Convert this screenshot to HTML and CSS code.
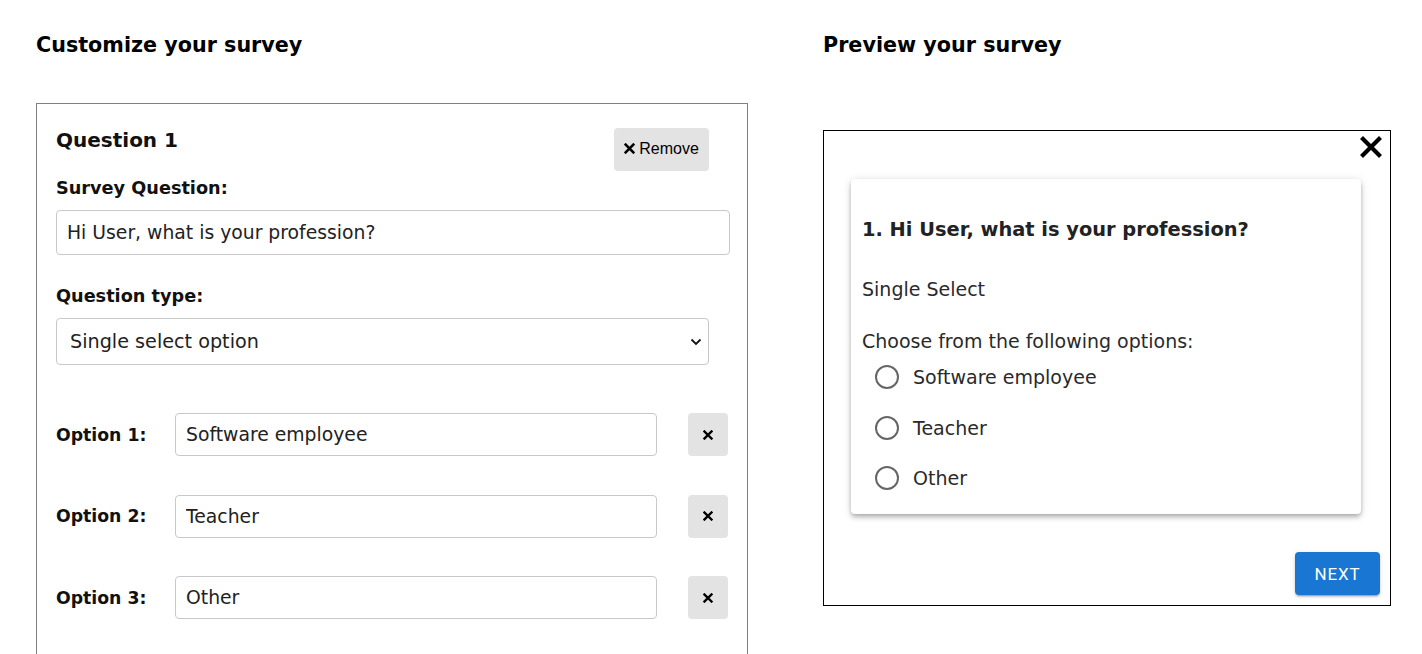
FILE: index.html
```html
<!DOCTYPE html>
<html lang="en">
<head>
<meta charset="utf-8">
<title>Survey builder</title>
<link rel="stylesheet" href="styles.css">
</head>
<body>
<div class="page">
  <section class="col col-left">
    <h2 class="heading">Customize your survey</h2>
    <div class="editor">
      <div class="q-head">
        <h3 class="q-title">Question 1</h3>
        <button class="remove-btn"><svg class="remove-x" viewBox="0 0 10 10" width="11" height="11"><path d="M1.5 1.5 L8.5 8.5 M8.5 1.5 L1.5 8.5" stroke="#000" stroke-width="2.4" stroke-linecap="square"/></svg>Remove</button>
      </div>
      <label class="field-label first">Survey Question:</label>
      <input class="text-input" type="text" value="Hi User, what is your profession?">
      <label class="field-label">Question type:</label>
      <div class="select-wrap">
        <select class="select-input"><option>Single select option</option></select>
        <svg class="chevron" viewBox="0 0 12 8" width="12" height="8"><path d="M1.5 1.5 L6 6 L10.5 1.5" fill="none" stroke="#111" stroke-width="1.8"/></svg>
      </div>
      <div class="options">
        <div class="opt-row">
          <span class="opt-label">Option 1:</span>
          <input class="opt-input" type="text" value="Software employee">
          <button class="del-btn"><svg viewBox="0 0 10 10" width="10" height="10"><path d="M1.5 1.5 L8.5 8.5 M8.5 1.5 L1.5 8.5" stroke="#000" stroke-width="2.4" stroke-linecap="square"/></svg></button>
        </div>
        <div class="opt-row">
          <span class="opt-label">Option 2:</span>
          <input class="opt-input" type="text" value="Teacher">
          <button class="del-btn"><svg viewBox="0 0 10 10" width="10" height="10"><path d="M1.5 1.5 L8.5 8.5 M8.5 1.5 L1.5 8.5" stroke="#000" stroke-width="2.4" stroke-linecap="square"/></svg></button>
        </div>
        <div class="opt-row">
          <span class="opt-label">Option 3:</span>
          <input class="opt-input" type="text" value="Other">
          <button class="del-btn"><svg viewBox="0 0 10 10" width="10" height="10"><path d="M1.5 1.5 L8.5 8.5 M8.5 1.5 L1.5 8.5" stroke="#000" stroke-width="2.4" stroke-linecap="square"/></svg></button>
        </div>
      </div>
    </div>
  </section>
  <section class="col col-right">
    <h2 class="heading">Preview your survey</h2>
    <div class="preview">
      <svg class="close-x" viewBox="0 0 22 22" width="22" height="22"><path d="M3 3 L19 19 M19 3 L3 19" stroke="#000" stroke-width="4.2" stroke-linecap="square"/></svg>
      <div class="q-card">
        <h3 class="p-title">1. Hi User, what is your profession?</h3>
        <p class="p-type">Single Select</p>
        <p class="p-choose">Choose from the following options:</p>
        <ul class="radios">
          <li class="radio"><span class="circle"></span>Software employee</li>
          <li class="radio"><span class="circle"></span>Teacher</li>
          <li class="radio"><span class="circle"></span>Other</li>
        </ul>
      </div>
      <div class="actions"><button class="next-btn">Next</button></div>
    </div>
  </section>
</div>
</body>
</html>
```

FILE: styles.css
```css
* { box-sizing: border-box; }
html, body { margin: 0; padding: 0; background: #fff; }
body {
  font-family: "DejaVu Sans", "Noto Sans", sans-serif;
  color: #111;
  overflow: hidden;
  height: 654px;
}
.page {
  display: flex;
  gap: 75px;
  padding: 0 31px 0 36px;
}
.col-left { width: 712px; flex: none; }
.col-right { width: 568px; flex: none; }
.heading {
  margin: 30px 0 0;
  font-size: 20.7px;
  line-height: 30px;
  font-weight: 700;
  color: #000;
}
.editor {
  margin-top: 43px;
  border: 1px solid #808080;
  border-bottom: none;
  height: 560px;
  padding: 22px 17px 0 19px;
}
.q-head {
  display: flex;
  justify-content: space-between;
  align-items: flex-start;
}
.q-title {
  margin: 0;
  font-size: 20px;
  line-height: 28px;
  font-weight: 700;
}
.remove-btn {
  margin: 2px 21px 0 0;
  width: 95px;
  height: 43px;
  border: none;
  border-radius: 4px;
  background: #e3e3e3;
  font-family: "Liberation Sans", Arial, sans-serif;
  font-size: 16px;
  color: #000;
  display: flex;
  align-items: center;
  justify-content: center;
  gap: 4px;
  padding: 0 0 2px;
}
.field-label {
  display: block;
  font-size: 17.7px;
  line-height: 22px;
  font-weight: 700;
  margin-top: 30px;
}
.field-label.first { margin-top: 6px; }
.text-input, .select-input, .opt-input {
  display: block;
  font-family: "DejaVu Sans", "Noto Sans", sans-serif;
  font-size: 18.8px;
  color: #222;
  border: 1px solid #c8c8c8;
  border-radius: 4px;
  background: #fff;
  outline: none;
}
.text-input {
  margin-top: 11px;
  width: 100%;
  height: 45px;
  padding: 0 10px;
}
.select-wrap {
  position: relative;
  margin-top: 11px;
  width: 653px;
}
.select-input {
  width: 100%;
  height: 47px;
  padding: 0 13px;
  font-size: 19.2px;
  appearance: none;
  -webkit-appearance: none;
}
.chevron {
  position: absolute;
  right: 7px;
  top: 20px;
}
.options {
  margin-top: 48px;
  display: flex;
  flex-direction: column;
  gap: 38.5px;
}
.opt-row {
  display: flex;
  align-items: center;
}
.opt-label {
  width: 119px;
  flex: none;
  font-size: 17.3px;
  font-weight: 700;
}
.opt-input {
  width: 482px;
  height: 43px;
  padding: 0 10px;
}
.del-btn {
  margin-left: 31px;
  width: 40px;
  height: 43px;
  border: none;
  border-radius: 4px;
  background: #e3e3e3;
  display: flex;
  align-items: center;
  justify-content: center;
  padding: 0;
}
.preview {
  position: relative;
  margin-top: 70px;
  width: 568px;
  height: 476px;
  border: 1px solid #000;
  display: flex;
  flex-direction: column;
  padding: 48px 29px 10px 27px;
}
.close-x {
  position: absolute;
  top: 5px;
  right: 8px;
}
.q-card {
  background: #fff;
  border-radius: 4px;
  box-shadow: 0 2px 4px -1px rgba(0,0,0,0.2), 0 4px 5px 0 rgba(0,0,0,0.14), 0 1px 10px 0 rgba(0,0,0,0.12);
  padding: 38px 11px 18px;
  height: 335px;
  color: #2a2a2a;
}
.p-title {
  margin: 0;
  font-size: 19.4px;
  line-height: 26px;
  font-weight: 700;
  color: #222;
}
.p-type {
  margin: 34px 0 0;
  font-size: 19px;
  line-height: 24px;
}
.p-choose {
  margin: 28px 0 0;
  font-size: 19px;
  line-height: 24px;
}
.radios {
  list-style: none;
  margin: 0;
  padding: 0 0 0 13px;
}
.radio {
  display: flex;
  align-items: center;
  height: 50.5px;
  font-size: 19px;
}
.radio:first-child { margin-top: -1px; }
.circle {
  width: 24px;
  height: 24px;
  border: 2px solid #666;
  border-radius: 50%;
  margin-right: 14px;
  flex: none;
}
.actions {
  margin-top: auto;
  display: flex;
  justify-content: flex-end;
}
.next-btn {
  margin-right: -19px;
  width: 85px;
  height: 43px;
  border: none;
  border-radius: 4px;
  background: #1976d2;
  color: #fff;
  font-family: Roboto, "Liberation Sans", sans-serif;
  font-weight: 400;
  font-size: 17px;
  text-transform: uppercase;
  letter-spacing: 0.8px;
  box-shadow: 0 3px 1px -2px rgba(0,0,0,0.2), 0 2px 2px 0 rgba(0,0,0,0.14), 0 1px 5px 0 rgba(0,0,0,0.12);
}
```
